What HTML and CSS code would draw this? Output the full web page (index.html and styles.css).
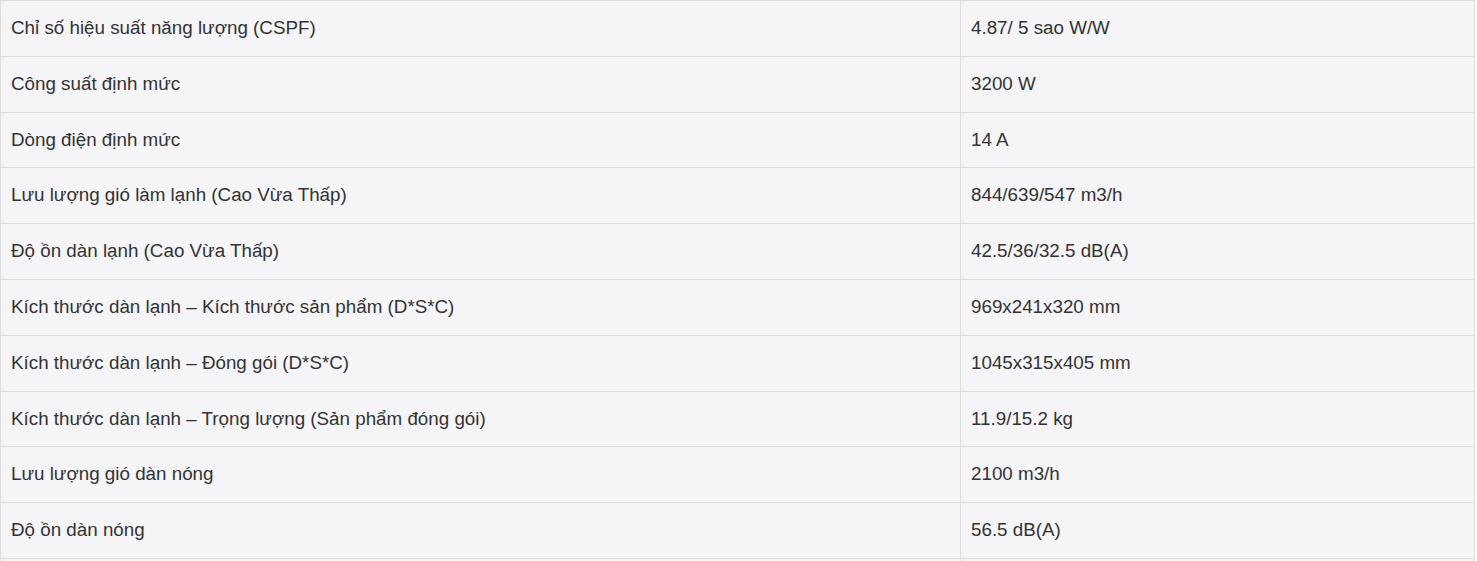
FILE: index.html
```html
<!DOCTYPE html>
<html lang="vi">
<head>
<meta charset="utf-8">
<link rel="stylesheet" href="styles.css">
</head>
<body>
<table class="spec">
<tbody>
<tr><td class="k">Chỉ số hiệu suất năng lượng (CSPF)</td><td class="v">4.87/ 5 sao W/W</td></tr>
<tr><td class="k">Công suất định mức</td><td class="v">3200 W</td></tr>
<tr><td class="k">Dòng điện định mức</td><td class="v">14 A</td></tr>
<tr><td class="k">Lưu lượng gió làm lạnh (Cao Vừa Thấp)</td><td class="v">844/639/547 m3/h</td></tr>
<tr><td class="k">Độ ồn dàn lạnh (Cao Vừa Thấp)</td><td class="v">42.5/36/32.5 dB(A)</td></tr>
<tr><td class="k">Kích thước dàn lạnh – Kích thước sản phẩm (D*S*C)</td><td class="v">969x241x320 mm</td></tr>
<tr><td class="k">Kích thước dàn lạnh – Đóng gói (D*S*C)</td><td class="v">1045x315x405 mm</td></tr>
<tr><td class="k">Kích thước dàn lạnh – Trọng lượng (Sản phẩm đóng gói)</td><td class="v">11.9/15.2 kg</td></tr>
<tr><td class="k">Lưu lượng gió dàn nóng</td><td class="v">2100 m3/h</td></tr>
<tr><td class="k">Độ ồn dàn nóng</td><td class="v">56.5 dB(A)</td></tr>
<tr><td class="k">&nbsp;</td><td class="v">&nbsp;</td></tr>
</tbody>
</table>
</body>
</html>
```
FILE: styles.css
```css
html, body {
  margin: 0;
  padding: 0;
  background: #ffffff;
}
.spec {
  border-collapse: collapse;
  width: 1475px;
  font-family: "Liberation Sans", Arial, sans-serif;
  font-size: 18.8px;
  color: #333333;
  background: #f5f5f7;
}
.spec td {
  border: 1px solid #dddddd;
  padding: 14px 10px;
  line-height: 26.8px;
  text-align: left;
  vertical-align: middle;
}
.spec .k {
  width: 939px;
}
```
